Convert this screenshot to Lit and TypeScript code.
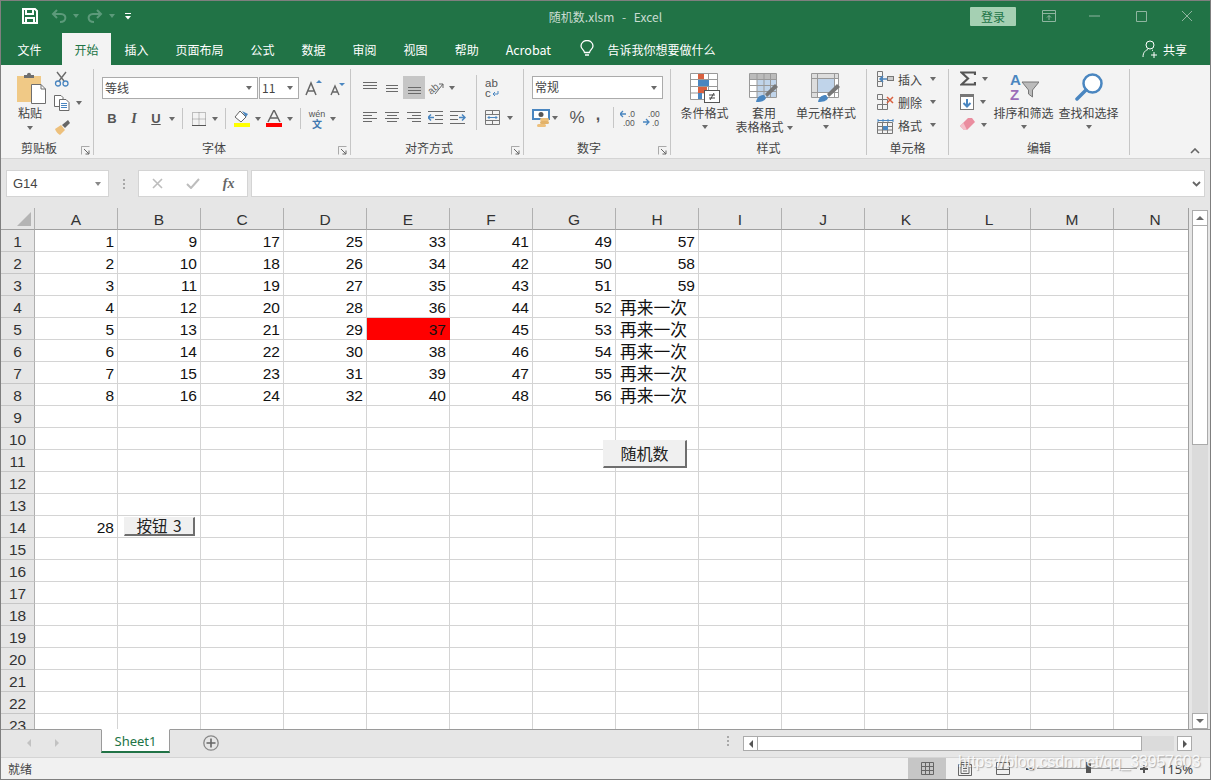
import {LitElement, html, svg, css} from 'lit';
import {customElement} from 'lit/decorators.js';

const G = '#6a6a6a';
const B = '#4a86c0';

const ic = (w: number, h: number, body: unknown) =>
    html`<svg width=${w} height=${h} viewBox="0 0 ${w} ${h}" fill="none">${body}</svg>`;

// horizontal text lines of the alignment buttons
const lines = (rows: number[][], color = G) =>
    rows.map(r => svg`<path d="M${r[0]} ${r[2] + 0.5}H${r[1]}" stroke=${color}/>`);

const COLS = 'ABCDEFGHIJKLMN'.split('');
const ROWS = Array.from({length: 23}, (_, i) => i + 1);

const icons = {
    save: ic(16, 16, svg`<path d="M1 1H13L15 3V15H1Z" stroke="#fff" stroke-width="2"/><path d="M4 1V6H11V1M4 15V10H12V15" stroke="#fff" stroke-width="2"/>`),
    undo: ic(16, 14, svg`<path d="M6 1L2 5L6 9M2 5H10C16 5 16 13 9 13" stroke="#5c9a7a" stroke-width="2"/>`),
    redo: ic(16, 14, svg`<path d="M10 1L14 5L10 9M14 5H6C0 5 0 13 7 13" stroke="#5c9a7a" stroke-width="2"/>`),
    custom: ic(8, 8, svg`<path d="M1 1.5H7" stroke="#fff"/><path d="M1 4H7L4 7.5Z" fill="#fff"/>`),
    ribbonOpt: ic(14, 12, svg`<path d="M.5 .5H13.5V11.5H.5ZM.5 3.5H13.5M7 10V5.5M5 7.5L7 5.5L9 7.5" stroke="#8fb5a0"/>`),
    min: ic(12, 2, svg`<path d="M0 1H11" stroke="#8fb5a0"/>`),
    max: ic(11, 11, svg`<path d="M.5 .5H10.5V10.5H.5Z" stroke="#8fb5a0"/>`),
    close: ic(12, 12, svg`<path d="M1 1L11 11M11 1L1 11" stroke="#8fb5a0"/>`),
    bulb: ic(14, 18, svg`<path d="M4.5 12.5C4 9.5 1 9 1 6A6 5.5 0 0 1 13 6C13 9 10 9.5 9.5 12.5ZM5 15H9" stroke="#fff" stroke-width="1.3"/>`),
    person: ic(17, 18, svg`<circle cx="8" cy="5" r="4" stroke="#fff"/><path d="M1 17C1 12 4 10 6 9.500M10 10L11 10.500M12 12V18M9 15H15" stroke="#fff"/>`),
    paste: ic(30, 32, svg`<path d="M0 4H24V30H0Z" fill="#f0c986"/><path d="M7 3H10C10 0 14 0 14 3H17V6H7Z" fill="#6e6e6e"/><path d="M14.500 12.500H24L28.500 17V31.500H14.500Z" fill="#fff" stroke="#6e6e6e"/><path d="M24 12.500V17H28.500" stroke="#6e6e6e"/>`),
    scissors: ic(16, 16, svg`<path d="M3 1L10 10M12 1L5 10" stroke="#6a6a6a" stroke-width="1.4"/><circle cx="4" cy="12.500" r="2.500" stroke=${B} stroke-width="1.300"/><circle cx="11.500" cy="12.500" r="2.500" stroke=${B} stroke-width="1.300"/>`),
    copy: ic(16, 16, svg`<path d="M.5 .5H7L9 2.500V11.500H.5Z" fill="#fff" stroke="#6a6a6a"/><path d="M5.500 4.500H12L15 7.500V15.500H5.500Z" fill="#fff" stroke="#6a6a6a"/>${lines([[7, 13, 8], [7, 13, 10], [7, 13, 12]], B)}`),
    brush: ic(16, 15, svg`<path d="M1 9L7 5L11 10L6 15C4 14 2 12 1 9Z" fill="#edc07c"/><path d="M8 5L14 0L16 3L11 8Z" fill="#666"/>`),
    launcher: ic(9, 9, svg`<path d="M.5 4V.5H8.500M.5 .5V8.500" stroke="#aaa"/><path d="M3 3L8 8M8 4.500V8H4.500" stroke="#666"/>`),
    growA: ic(18, 16, svg`<path d="M1 15L6 3L11 15M3 11H9" stroke="#666" stroke-width="1.500"/><path d="M11 3L14 0L17 3Z" fill=${B}/>`),
    shrinkA: ic(16, 15, svg`<path d="M1 14L5 5L9 14M2.500 11H7.500" stroke="#666" stroke-width="1.400"/><path d="M9 2H15L12 5Z" fill=${B}/>`),
    bordersI: ic(14, 14, svg`<path d="M.5 .5H13.500V13.500H.5ZM.5 7H13.500M7 .5V13.500" stroke="#888" stroke-dasharray="1 1"/><path d="M0 13.500H14" stroke="#555"/>`),
    fill: ic(17, 17, svg`<path d="M6 1L12 7L7 12L1 7Z" fill="#fff" stroke="#666"/><path d="M8 1L14 4L12 7" fill=${B}/><rect y="13" width="16" height="4" fill="#ffff00"/>`),
    fontA: ic(16, 17, svg`<path d="M2 12L8 0L14 12M4.500 8H11.500" stroke="#666" stroke-width="1.500"/><rect y="13" width="16" height="4" fill="#ff0000"/>`),
    orient: ic(18, 16, svg`<text x="0" y="12" transform="rotate(-40 6 8)" font-size="10" fill="#666" font-family="Liberation Sans">ab</text><path d="M8 14L16 4M16 4H12M16 4V8" stroke="#666"/>`),
    wrap: ic(15, 20, svg`<text x="0" y="9" font-size="11.500" font-family="Liberation Sans" fill="#555">ab</text><text x="0" y="19" font-size="11.500" font-family="Liberation Sans" fill="#555">c</text><path d="M13 13V16H8M10 14L8 16L10 18" stroke=${B}/>`),
    merge: ic(15, 15, svg`<path d="M.5 .5H14.500V14.500H.5ZM.5 4.500H14.500M.5 10.500H14.500M7.500 .5V4.500M7.500 10.500V14.500" stroke="#777"/><path d="M3 7.500H12M4.500 6L3 7.500L4.500 9M10.500 6L12 7.500L10.500 9" stroke=${B}/>`),
    indentL: ic(16, 13, svg`${lines([[0, 15, 0], [7, 15, 4], [7, 15, 8], [0, 15, 12]])}<path d="M0 6.500H6M3 3.500L0 6.500L3 9.500" stroke=${B} stroke-width="1.500"/>`),
    indentR: ic(16, 13, svg`${lines([[0, 15, 0], [0, 8, 4], [0, 8, 8], [0, 15, 12]])}<path d="M9 6.500H15M12 3.500L15 6.500L12 9.500" stroke=${B} stroke-width="1.500"/>`),
    money: ic(18, 18, svg`<rect x="1" y="1" width="16" height="9" fill="#fff" stroke=${B} stroke-width="2"/><circle cx="9" cy="5.500" r="2.500" fill="#555"/><rect x="8" y="9" width="9" height="3" rx="1.500" fill="#edc07c"/><rect x="8" y="12" width="9" height="3" rx="1.500" fill="#e2b26a"/><rect x="5" y="15" width="9" height="3" rx="1.500" fill="#edc07c"/>`),
    decInc: ic(20, 16, svg`<path d="M0 4H6M3 1L0 4L3 7" stroke=${B} stroke-width="1.300"/><text x="8" y="7" font-size="8.500" fill="#555" font-family="Liberation Sans">.0</text><text x="3" y="16" font-size="8.500" fill="#555" font-family="Liberation Sans">.00</text>`),
    decDec: ic(20, 16, svg`<text x="5" y="7" font-size="8.500" fill="#555" font-family="Liberation Sans">.00</text><path d="M0 12H6M3 9L6 12L3 15" stroke=${B} stroke-width="1.300"/><text x="9" y="16" font-size="8.500" fill="#555" font-family="Liberation Sans">.0</text>`),
    cond: ic(30, 30, svg`<path d="M.5 .5H27.500V26.500H.5ZM.5 6.500H27.500M.5 13.500H27.500M.5 20H27.500M9.500 .5V26.500M18.500 .5V26.500" stroke="#999" fill="#fff"/><rect x="8" y="1" width="6" height="5" fill="#d9603f"/><rect x="8" y="7" width="11" height="6" fill=${B}/><rect x="8" y="14" width="9" height="6" fill="#d9603f"/><rect x="8" y="20" width="4" height="6" fill=${B}/><rect x="14.500" y="17.500" width="15" height="12" fill="#fff" stroke="#555"/><path d="M19 22H25M19 25H25M24 20L20 27" stroke="#444"/>`),
    table: ic(30, 30, svg`<path d="M.5 .5H27.500V24.500H.5Z" fill="#fff" stroke="#999"/><rect x="1" y="1" width="26" height="5" fill="#bbb"/><rect x="8" y="7" width="19" height="17" fill="#c0d4ea"/><path d="M.5 6.500H27.500M.5 12.500H27.500M.5 18.500H27.500M8 .5V24.500M15 .5V24.500M21.500 .5V24.500" stroke="#999"/><path d="M7 29C8 23 12 22 15 22L17 25C16 28 12 29 7 29Z" fill=${B}/><path d="M16 21L26 11L29 14L18 24Z" fill="#777"/>`),
    styles: ic(30, 30, svg`<path d="M.5 .5H27.500V24.500H.5Z" fill="#fff" stroke="#999"/><path d="M1 1H27V5H1ZM1 5H6V24H1Z" fill="#ddd"/><rect x="6" y="6" width="17" height="13" fill="#c0d4ea"/><path d="M6.500 .5V24.500M23.500 .5V24.500M.5 5.500H27.500M.5 19.500H27.500" stroke="#999"/><path d="M7 29C8 23 12 22 15 22L17 25C16 28 12 29 7 29Z" fill=${B}/><path d="M16 21L26 11L29 14L18 24Z" fill="#777"/>`),
    insert: ic(17, 16, svg`<path d="M.5 .5H5.500V5.500H.5ZM.5 5.500V10.500H5.500V5.500M.5 10.500V15.500H5.500V10.500" stroke="#777"/><path d="M3 8H10M6 5L3 8L6 11" stroke=${B} stroke-width="1.500"/><rect x="10.500" y="5.500" width="6" height="4" fill="#ccc" stroke="#777"/>`),
    remove: ic(17, 16, svg`<path d="M.5 .5H5.500V5.500H.5ZM.5 10.500H5.500V15.500H.5ZM5.500 5.500H10.500V10.500H5.500ZM5.500 10.500H10.500V15.500H5.500Z" stroke="#777"/><path d="M10 3L16 9M16 3L10 9" stroke="#d9603f" stroke-width="1.500"/>`),
    format: ic(17, 17, svg`<path d="M1 3.500H16M1 2V5M6 2V5M11 2V5M16 2V5" stroke=${B}/><path d="M.5 5.500H15.500V16.500H.5ZM.5 9.500H15.500M.5 13H15.500M5.500 5.500V16.500M10.500 5.500V16.500" stroke="#777"/><rect x="6" y="9" width="5" height="4" fill=${B}/>`),
    sigma: ic(16, 15, svg`<path d="M15 4V1.500H1.500L8 7.500L1.500 13.500H15V11" stroke="#555" stroke-width="2.200"/>`),
    fillDown: ic(14, 16, svg`<rect x=".5" y=".5" width="13" height="15" fill="#fff" stroke="#777"/><rect x="1" y="1" width="12" height="2" fill="#777"/><path d="M7 5V12M3.500 9L7 12.500L10.500 9" stroke=${B} stroke-width="2"/>`),
    eraser: ic(15, 13, svg`<path d="M0 8L8 0H12L15 4L7 12H4Z" fill="#ea8d9f"/><path d="M0 8L4 12H7L3.500 5Z" fill="#f4c0ca"/>`),
    sort: ic(30, 28, svg`<text x="1" y="12" font-size="15" font-weight="700" fill=${B} font-family="Liberation Sans">A</text><text x="1" y="27" font-size="15" font-weight="700" fill="#9b6cb8" font-family="Liberation Sans">Z</text><path d="M13 9H30L23.500 17V24L19.500 21V17Z" fill="#bbb" stroke="#777"/>`),
    find: ic(28, 28, svg`<circle cx="17.500" cy="10.500" r="9" fill="#fff" stroke=${B} stroke-width="2.500"/><path d="M11 17L2 26" stroke=${B} stroke-width="3.500" stroke-linecap="round"/>`),
    collapse: ic(10, 6, svg`<path d="M1 5L5 1L9 5" stroke="#666" stroke-width="1.600"/>`),
    cross: ic(11, 11, svg`<path d="M1 1L10 10M10 1L1 10" stroke="#bdbdbd" stroke-width="1.600"/>`),
    check: ic(14, 11, svg`<path d="M1 6L5 10L13 1" stroke="#bdbdbd" stroke-width="2"/>`),
    chevron: ic(9, 6, svg`<path d="M1 1L4.500 4.500L8 1" stroke="#666" stroke-width="1.800"/>`),
    plus: ic(16, 16, svg`<circle cx="8" cy="8" r="7.200" stroke="#888" stroke-width="1.300"/><path d="M3.500 8H12.500M8 3.500V12.500" stroke="#666" stroke-width="1.600"/>`),
    normal: ic(13, 13, svg`<path d="M.5 .5H12.500V12.500H.5ZM.5 4.500H12.500M.5 8.500H12.500M4.500 .5V12.500M8.500 .5V12.500" stroke="#666"/>`),
    layout: ic(14, 14, svg`<path d="M.5 2.500H13.500V13.500H.5Z" stroke="#666"/><path d="M3 .5H11V11.500H3ZM5 4H9M5 6.500H9M5 9H9" stroke="#666"/>`),
    breakV: ic(14, 13, svg`<path d="M.5 .5H13.500V12.500H.5ZM.5 7.500H13.500M7 .5V7.500" stroke="#666"/>`),
};

@customElement('app-root')
class AppRoot extends LitElement {
    static styles = css`
:host {
display: block;
width: 1211px;
height: 780px;
overflow: hidden;
font-family: "Noto Sans CJK SC", "Noto Sans", sans-serif;
font-size: 12px;
color: #444;
}
svg { display: block; flex: none; }
.win {
position: relative;
box-sizing: border-box;
width: 100%;
height: 100%;
border: 1px solid #7f7f7f;
display: flex;
flex-direction: column;
background: #e6e6e6;
}
.titlebar {
flex: none;
height: 32px;
padding-bottom: 2px;
box-sizing: border-box;
background: #217346;
display: grid;
grid-template-columns: 1fr auto 1fr;
align-items: center;
color: #c9dcd1;
}
.qat { display: flex; align-items: center; padding-left: 21px; }
.qat .dim { margin-left: 6px; border-top-color: #5c9a7a; }
.gap13 { width: 13px; }
.redo { margin-left: 8px; }
.cust { margin-left: 9px; }
.title { word-spacing: 5px; }
.winbtns { display: flex; align-items: center; justify-content: flex-end; }
.login {
width: 46px;
height: 19px;
background: #a5d0b3;
color: #217346;
border-radius: 1px;
display: flex;
align-items: center;
justify-content: center;
font-size: 12px;
margin-right: 10px;
}
.wb { width: 46px; display: flex; justify-content: center; }
.tabs {
flex: none;
height: 32px;
background: #217346;
display: flex;
align-items: stretch;
color: #fff;
padding-left: 3px;
}
.tab { padding: 0 13.500px; display: flex; align-items: center; justify-content: center; }
.tab.file { margin-right: 7px; }
.tab.on { background: #f3f3f3; color: #217346; padding: 0 12.500px; }
.tab.acro { font-size: 12.500px; }
.tell { display: flex; align-items: center; gap: 14px; margin-left: 15px; }
.share { margin-left: auto; display: flex; align-items: center; gap: 4px; padding-right: 23px; }
.ribbon {
flex: none;
height: 94px;
box-sizing: border-box;
padding: 4px 0 3px;
background: #f3f3f3;
border-bottom: 1px solid #d4d4d4;
display: flex;
position: relative;
}
.group {
box-sizing: border-box;
position: relative;
border-right: 1px solid #c6c6c6;
display: flex;
flex-direction: column;
}
.g-clip { width: 93px; }
.g-font { width: 257px; }
.g-align { width: 173px; }
.g-num { width: 147px; }
.g-style { width: 196px; }
.g-cell { width: 82px; }
.g-edit { width: 181px; }
.body { flex: 1; display: flex; min-height: 0; }
.label { height: 17px; line-height: 19px; text-align: center; }
.label.lch { padding-right: 16px; }
.launch { position: absolute; right: 3px; bottom: 0; }
.collapse { position: absolute; right: 10px; bottom: 4px; }
.ar {
flex: none;
width: 0;
height: 0;
border-left: 3.500px solid transparent;
border-right: 3.500px solid transparent;
border-top: 4px solid #6a6a6a;
}
.arw { width: 10px; display: flex; justify-content: center; flex: none; }
.pastebtn { width: 46px; margin-left: 6px; display: flex; flex-direction: column; align-items: center; padding-top: 3px; }
.pastebtn svg { margin-left: 4px; }
.pastebtn span { margin-top: 1px; line-height: 16px; }
.pastebtn .ar { margin-top: 5px; }
.clipcol { display: flex; flex-direction: column; padding: 2px 0 0 1px; gap: 8px; }
.cliprow { display: flex; align-items: center; height: 16px; gap: 6px; }
.col { display: flex; flex-direction: column; }
.fontcol { padding: 8px 0 0 7px; }
.row { display: flex; align-items: center; }
.row.r2 { margin-top: 9px; height: 21px; }
.select {
box-sizing: border-box;
height: 22px;
background: #fff;
border: 1px solid #ababab;
display: flex;
align-items: center;
justify-content: space-between;
padding: 0 5px 0 2px;
color: #444;
}
.select span { margin-top: -2px; }
.fname { width: 156px; margin-left: 1px; }
.fsize { width: 40px; margin-left: 1px; }
.grow { margin-left: 6px; }
.shrink { margin-left: 7px; }
.b22 { width: 22px; height: 21px; display: flex; align-items: center; justify-content: center; flex: none; }
.tx { font-family: "Liberation Sans", sans-serif; font-size: 13px; color: #555; }
.tx.b { font-weight: 700; }
.tx.i { font-style: italic; font-family: "Liberation Serif", serif; font-weight: 700; font-size: 14px; }
.tx.u { font-weight: 700; text-decoration: underline; }
.sep { flex: none; width: 1px; height: 21px; background: #c6c6c6; margin: 0 5px; }
.wen { display: flex; flex-direction: column; align-items: center; line-height: 10px; font-size: 9px; font-family: "Liberation Sans", sans-serif; color: #555; }
.wen b { color: #3f78b0; font-family: "Noto Sans CJK SC", sans-serif; font-size: 10px; }
.aligncol { padding: 7px 0 0 8px; width: 125px; box-sizing: border-box; flex: none; }
.aligncol .row { height: 23px; }
.aligncol .row + .row { margin-top: 7px; }
.tall { height: 23px; }
.on22 { background: #c6c6c6; }
.vsep { width: 1px; height: 55px; margin: 6px 0 0; background: #c6c6c6; flex: none; }
.wrapcol { padding: 7px 0 0 4px; }
.wrapcol .row { height: 23px; }
.wrapcol .row + .row { margin-top: 7px; }
.wrapcol .arw { margin-left: 2px; }
.numcol { padding: 7px 0 0 8px; }
.nsel { width: 131px; height: 23px; }
.numrow { display: flex; align-items: center; margin-top: 7px; height: 23px; }
.pct { font-family: "Liberation Sans", sans-serif; font-size: 17px; color: #555; width: 22px; text-align: center; margin-left: 6px; }
.comma { font-family: "Liberation Sans", sans-serif; font-size: 16px; font-weight: 700; color: #555; width: 20px; text-align: center; margin-top: -6px; }
.decr { margin-left: 1px; }
.bigs { padding: 4px 0 0 4px; gap: 0; }
.big { display: flex; flex-direction: column; align-items: center; line-height: 14px; text-align: center; white-space: nowrap; }
.big svg { margin-bottom: 3px; }
.big .ar { margin-top: 5px; }
.big .inl { display: inline-block; margin: 0 0 2px 3px; }
.w59 { width: 59px; }
.w60 { width: 60px; }
.w64 { width: 64px; }
.w65 { width: 65px; }
.cellcol { padding: 1px 0 0 10px; gap: 5px; }
.cellrow { display: flex; align-items: center; height: 18px; gap: 4px; }
.cellrow .ar { margin-left: 4px; }
.editsmall { padding: 1px 0 0 11px; gap: 6px; }
.editsmall .row { height: 17px; gap: 6px; }
.edit-bigs { padding-left: 3px; }
.edit-bigs .big svg { margin-bottom: 5px; }
.formula {
flex: none;
height: 49px;
box-sizing: border-box;
padding: 11px 5px 11px 5px;
display: flex;
align-items: stretch;
background: #e6e6e6;
}
.box { box-sizing: border-box; background: #fff; border: 1px solid #d4d4d4; display: flex; align-items: center; }
.namebox { width: 103px; padding: 0 7px 0 6px; justify-content: space-between; color: #444; font-family: "Liberation Sans", sans-serif; font-size: 13px; }
.namebox .ar { border-top-color: #888; }
.grip { width: 29px; display: flex; flex-direction: column; align-items: center; justify-content: center; gap: 2px; }
.grip i { width: 2px; height: 2px; background: #a8a8a8; }
.fxbox { width: 110px; justify-content: space-around; padding: 0 1px; }
.fx { font-family: "Liberation Serif", serif; font-style: italic; font-weight: 700; font-size: 14px; color: #666; }
.input { flex: 1; margin-left: 3px; justify-content: flex-end; padding-right: 3px; }
.sheetwrap { flex: 1; min-height: 0; display: flex; position: relative; }
.sheet {
box-sizing: border-box;
width: 1188px;
flex: none;
overflow: hidden;
display: grid;
grid-template-columns: 34px repeat(14, 83px);
grid-auto-rows: 22px;
background: #fff;
font-family: "Liberation Sans", "Noto Sans CJK SC", sans-serif;
font-size: 15.500px;
color: #111;
position: relative;
border-right: 1px solid #a0a0a0;
}
.corner, .ch, .rh { background: #e6e6e6; box-sizing: border-box; }
.corner { border-right: 1px solid #b0b0b0; border-bottom: 1px solid #a0a0a0; position: relative; }
.corner::after {
content: "";
position: absolute;
right: 3px;
bottom: 3px;
border-left: 14px solid transparent;
border-bottom: 14px solid #b4b4b4;
}
.ch {
border-right: 1px solid #b0b0b0;
border-bottom: 1px solid #a0a0a0;
text-align: center;
line-height: 24px;
color: #333;
}
.rh {
border-right: 1px solid #b0b0b0;
border-bottom: 1px solid #c6c6c6;
text-align: center;
line-height: 24px;
color: #333;
}
.c {
box-sizing: border-box;
border-right: 1px solid #d4d4d4;
border-bottom: 1px solid #d4d4d4;
text-align: right;
padding-right: 3px;
line-height: 24px;
white-space: nowrap;
}
.c.txt {
text-align: left;
padding: 0 0 0 4px;
font-family: "Noto Sans CJK SC", sans-serif;
font-size: 16.800px;
line-height: 23px;
}
.c.red { background: #ff0000; border-color: #ff0000; }
.fbtn {
position: absolute;
box-sizing: border-box;
background: #f0f0f0;
border: 1px solid #f0f0f0;
border-right: 2px solid #6e6e6e;
border-bottom: 2px solid #6e6e6e;
display: flex;
align-items: center;
justify-content: center;
font-family: "Noto Sans CJK SC", sans-serif;
color: #222;
padding-bottom: 2px;
}
.rand { left: 602px; top: 232px; width: 84px; height: 28px; font-size: 16px; }
.btn3 { left: 123px; top: 309px; width: 71px; height: 19px; font-size: 15.500px; word-spacing: 2px; }
.vscroll {
flex: 1;
margin-left: 3px;
display: flex;
flex-direction: column;
padding-top: 2px;
box-sizing: border-box;
}
.sb-btn { box-sizing: border-box; background: #fff; border: 1px solid #ababab; display: flex; align-items: center; justify-content: center; flex: none; }
.v-btn { width: 16px; height: 16px; }
.v-thumb { box-sizing: border-box; width: 16px; height: 219px; background: #fff; border: 1px solid #ababab; border-top: 0; flex: none; }
.v-track { flex: 1; width: 16px; background: #dbdbdb; }
.up { border-left: 4px solid transparent; border-right: 4px solid transparent; border-bottom: 4px solid #6a6a6a; }
.down { border-left: 4px solid transparent; border-right: 4px solid transparent; border-top: 4px solid #6a6a6a; }
.left { border-top: 4px solid transparent; border-bottom: 4px solid transparent; border-right: 4px solid #555; }
.right { border-top: 4px solid transparent; border-bottom: 4px solid transparent; border-left: 4px solid #555; }
.left.off { border-right-color: #c2c2c2; }
.right.off { border-left-color: #c2c2c2; }
.sheetbar {
flex: none;
height: 28px;
box-sizing: border-box;
border-top: 1px solid #9a9a9a;
display: flex;
align-items: flex-start;
background: #e6e6e6;
}
.nav { width: 100px; height: 26px; display: flex; align-items: center; justify-content: center; gap: 24px; padding-right: 16px; box-sizing: border-box; }
.sheettab {
box-sizing: border-box;
width: 69px;
height: 24px;
margin-top: -1px;
background: #fff;
border-left: 1px solid #9a9a9a;
border-right: 1px solid #9a9a9a;
border-top: 1px solid #fff;
border-bottom: 2px solid #217346;
color: #217346;
font-family: "Noto Sans", sans-serif;
font-size: 13px;
display: flex;
align-items: center;
justify-content: center;
}
.add { margin: 5px 0 0 33px; }
.hgrip { margin: 6px 7px 0 auto; width: 16px; display: flex; flex-direction: column; align-items: center; gap: 2px; }
.hgrip i { width: 2px; height: 2px; background: #a8a8a8; }
.hscroll { display: flex; margin: 6px 18px 0 0; height: 15px; }
.h-btn { width: 15px; height: 15px; }
.h-thumb { box-sizing: border-box; width: 384px; height: 15px; background: #fff; border: 1px solid #ababab; border-left: 0; }
.h-track { width: 32px; height: 15px; background: #dbdbdb; margin-right: 3px; }
.status {
flex: none;
height: 22px;
box-sizing: border-box;
background: #f1f1f1;
border-top: 1px solid #d4d4d4;
display: flex;
align-items: center;
padding-left: 7px;
color: #444;
}
.views { margin-left: auto; display: flex; align-items: stretch; height: 100%; }
.vw { width: 38px; display: flex; align-items: center; justify-content: center; }
.vw.on { background: #c6c6c6; }
.zoom { display: flex; align-items: center; margin-left: 4px; width: 134px; }
.zm { width: 8px; height: 2px; background: #555; flex: none; position: relative; }
.zm.p::after { content: ""; position: absolute; left: 3px; top: -3px; width: 2px; height: 8px; background: #555; }
.slider { width: 100px; height: 1px; background: #9a9a9a; margin: 0 3px; position: relative; flex: none; }
.thumb { position: absolute; left: 49px; top: -6px; width: 5px; height: 11px; background: #555; }
.pct2 { width: 50px; display: flex; align-items: center; font-family: "Noto Sans", sans-serif; font-size: 13px; color: #444; white-space: nowrap; }
.mark {
position: absolute;
left: 957px;
bottom: 7px;
line-height: 20px;
font-family: "Liberation Sans", sans-serif;
font-size: 15.800px;
color: rgba(255, 255, 255, 0.85);
text-shadow: 1px 1px 1px rgba(110, 110, 110, 0.5);
white-space: nowrap;
pointer-events: none;
}
`;

    arrow() {
	return html`<div class="arw"><div class="ar"></div></div>`;
    }

    big(icon: unknown, text: unknown, cls: string, arrow = true) {
	return html`<div class="big ${cls}">${icon}<span>${text}</span>${arrow ? html`<div class="ar"></div>` : ''}</div>`;
    }

    cellValue(col: number, row: number) {
	if (col == 0 && row == 14) return 28;
	if (col > 7 || row > 8) return '';
	if (col == 7 && row > 3) return '再来一次';
	return col * 8 + row;
    }

    renderGrid() {
	let cells = [html`<div class="corner"></div>`];
	for (let c of COLS) cells.push(html`<div class="ch">${c}</div>`);
	for (let r of ROWS) {
	    cells.push(html`<div class="rh">${r}</div>`);
	    COLS.forEach((_, i) => {
		let v = this.cellValue(i, r);
		let cls = 'c' + (typeof v == 'string' && v ? ' txt' : '') + (i == 4 && r == 5 ? ' red' : '');
		cells.push(html`<div class=${cls}>${v}</div>`);
	    });
	}
	return cells;
    }

    renderRibbon() {
	return html`<div class="ribbon">
<div class="group g-clip">
<div class="body">
<div class="pastebtn">${icons.paste}<span>粘贴</span><div class="ar"></div></div>
<div class="clipcol">
<div class="cliprow">${icons.scissors}</div>
<div class="cliprow">${icons.copy}<div class="ar"></div></div>
<div class="cliprow">${icons.brush}</div>
</div>
</div>
<div class="label lch">剪贴板</div><div class="launch">${icons.launcher}</div>
</div>
<div class="group g-font">
<div class="body"><div class="col fontcol">
<div class="row">
<div class="select fname"><span>等线</span><div class="ar"></div></div>
<div class="select fsize"><span>11</span><div class="ar"></div></div>
<div class="grow">${icons.growA}</div><div class="shrink">${icons.shrinkA}</div>
</div>
<div class="row r2">
<div class="b22 tx b">B</div><div class="b22 tx i">I</div><div class="b22 tx u">U</div>${this.arrow()}
<div class="sep"></div>
<div class="b22">${icons.bordersI}</div>${this.arrow()}
<div class="sep"></div>
<div class="b22">${icons.fill}</div>${this.arrow()}
<div class="b22">${icons.fontA}</div>${this.arrow()}
<div class="sep"></div>
<div class="b22"><div class="wen">wén<b>文</b></div></div>${this.arrow()}
</div>
</div></div>
<div class="label lch">字体</div><div class="launch">${icons.launcher}</div>
</div>
<div class="group g-align">
<div class="body">
<div class="col aligncol">
<div class="row">
<div class="b22">${ic(16, 12, lines([[1, 15, 0], [1, 15, 3], [1, 15, 6]]))}</div>
<div class="b22">${ic(16, 12, lines([[2, 14, 3], [2, 14, 6], [2, 14, 9]]))}</div>
<div class="b22 on22 tall">${ic(16, 12, lines([[2, 15, 5], [2, 15, 8], [2, 15, 11]]))}</div>
<div class="b22">${icons.orient}</div>${this.arrow()}
</div>
<div class="row">
<div class="b22">${ic(16, 11, lines([[1, 15, 0], [1, 10, 3], [1, 15, 6], [1, 10, 9]]))}</div>
<div class="b22">${ic(16, 11, lines([[1, 15, 0], [3, 13, 3], [1, 15, 6], [3, 13, 9]]))}</div>
<div class="b22">${ic(16, 11, lines([[1, 15, 0], [6, 15, 3], [1, 15, 6], [6, 15, 9]]))}</div>
<div class="b22">${icons.indentL}</div><div class="b22">${icons.indentR}</div>
</div>
</div>
<div class="vsep"></div>
<div class="col wrapcol">
<div class="row"><div class="b22 tall">${icons.wrap}</div></div>
<div class="row"><div class="b22 tall">${icons.merge}</div>${this.arrow()}</div>
</div>
</div>
<div class="label lch">对齐方式</div><div class="launch">${icons.launcher}</div>
</div>
<div class="group g-num">
<div class="body"><div class="col numcol">
<div class="select nsel"><span>常规</span><div class="ar"></div></div>
<div class="numrow">
${icons.money}${this.arrow()}
<div class="pct">%</div><div class="comma">,</div>
<div class="sep"></div>
<div class="b22">${icons.decInc}</div><div class="b22 decr">${icons.decDec}</div>
</div>
</div></div>
<div class="label lch">数字</div><div class="launch">${icons.launcher}</div>
</div>
<div class="group g-style">
<div class="body bigs">
${this.big(icons.cond, '条件格式', 'w59')}
${this.big(icons.table, html`套用<br>表格格式<span class="ar inl"></span>`, 'w60', false)}
${this.big(icons.styles, '单元格样式', 'w64')}
</div>
<div class="label">样式</div>
</div>
<div class="group g-cell">
<div class="body"><div class="col cellcol">
<div class="cellrow">${icons.insert}<span>插入</span><div class="ar"></div></div>
<div class="cellrow">${icons.remove}<span>删除</span><div class="ar"></div></div>
<div class="cellrow">${icons.format}<span>格式</span><div class="ar"></div></div>
</div></div>
<div class="label">单元格</div>
</div>
<div class="group g-edit">
<div class="body">
<div class="col editsmall">
<div class="row">${icons.sigma}<div class="ar"></div></div>
<div class="row">${icons.fillDown}<div class="ar"></div></div>
<div class="row">${icons.eraser}<div class="ar"></div></div>
</div>
<div class="body bigs edit-bigs">
${this.big(icons.sort, '排序和筛选', 'w65')}
${this.big(icons.find, '查找和选择', 'w65')}
</div>
</div>
<div class="label">编辑</div>
</div>
<div class="collapse">${icons.collapse}</div>
</div>`;
    }

    render() {
	let tabs = ['插入', '页面布局', '公式', '数据', '审阅', '视图', '帮助'];
	return html`<div class="win">
<div class="titlebar">
<div class="qat">${icons.save}<div class="gap13"></div>
${icons.undo}<div class="ar dim"></div>
<div class="redo">${icons.redo}</div><div class="ar dim"></div>
<div class="cust">${icons.custom}</div></div>
<div class="title">随机数.xlsm - Excel</div>
<div class="winbtns">
<div class="login">登录</div>
<div class="wb">${icons.ribbonOpt}</div><div class="wb">${icons.min}</div>
<div class="wb">${icons.max}</div><div class="wb">${icons.close}</div>
</div>
</div>
<div class="tabs">
<div class="tab file">文件</div><div class="tab on">开始</div>
${tabs.map(t => html`<div class="tab">${t}</div>`)}
<div class="tab acro">Acrobat</div>
<div class="tell">${icons.bulb}<span>告诉我你想要做什么</span></div>
<div class="share">${icons.person}<span>共享</span></div>
</div>
${this.renderRibbon()}
<div class="formula">
<div class="box namebox"><span>G14</span><div class="ar"></div></div>
<div class="grip"><i></i><i></i><i></i></div>
<div class="box fxbox">${icons.cross}${icons.check}<span class="fx">fx</span></div>
<div class="box input">${icons.chevron}</div>
</div>
<div class="sheetwrap">
<div class="sheet">
${this.renderGrid()}
<div class="fbtn rand">随机数</div>
<div class="fbtn btn3">按钮 3</div>
</div>
<div class="vscroll">
<div class="sb-btn v-btn"><div class="up"></div></div>
<div class="v-thumb"></div>
<div class="v-track"></div>
<div class="sb-btn v-btn"><div class="down"></div></div>
</div>
</div>
<div class="sheetbar">
<div class="nav"><div class="left off"></div><div class="right off"></div></div>
<div class="sheettab">Sheet1</div>
<div class="add">${icons.plus}</div>
<div class="hgrip"><i></i><i></i><i></i></div>
<div class="hscroll">
<div class="sb-btn h-btn"><div class="left"></div></div>
<div class="h-thumb"></div>
<div class="h-track"></div>
<div class="sb-btn h-btn"><div class="right"></div></div>
</div>
</div>
<div class="status">
<span>就绪</span>
<div class="views">
<div class="vw on">${icons.normal}</div><div class="vw">${icons.layout}</div><div class="vw">${icons.breakV}</div>
<div class="zoom"><div class="zm"></div><div class="slider"><div class="thumb"></div></div><div class="zm p"></div></div>
<div class="pct2">115%</div>
</div>
</div>
<div class="mark">https://blog.csdn.net/qq_33957603</div>
</div>`;
    }
}
